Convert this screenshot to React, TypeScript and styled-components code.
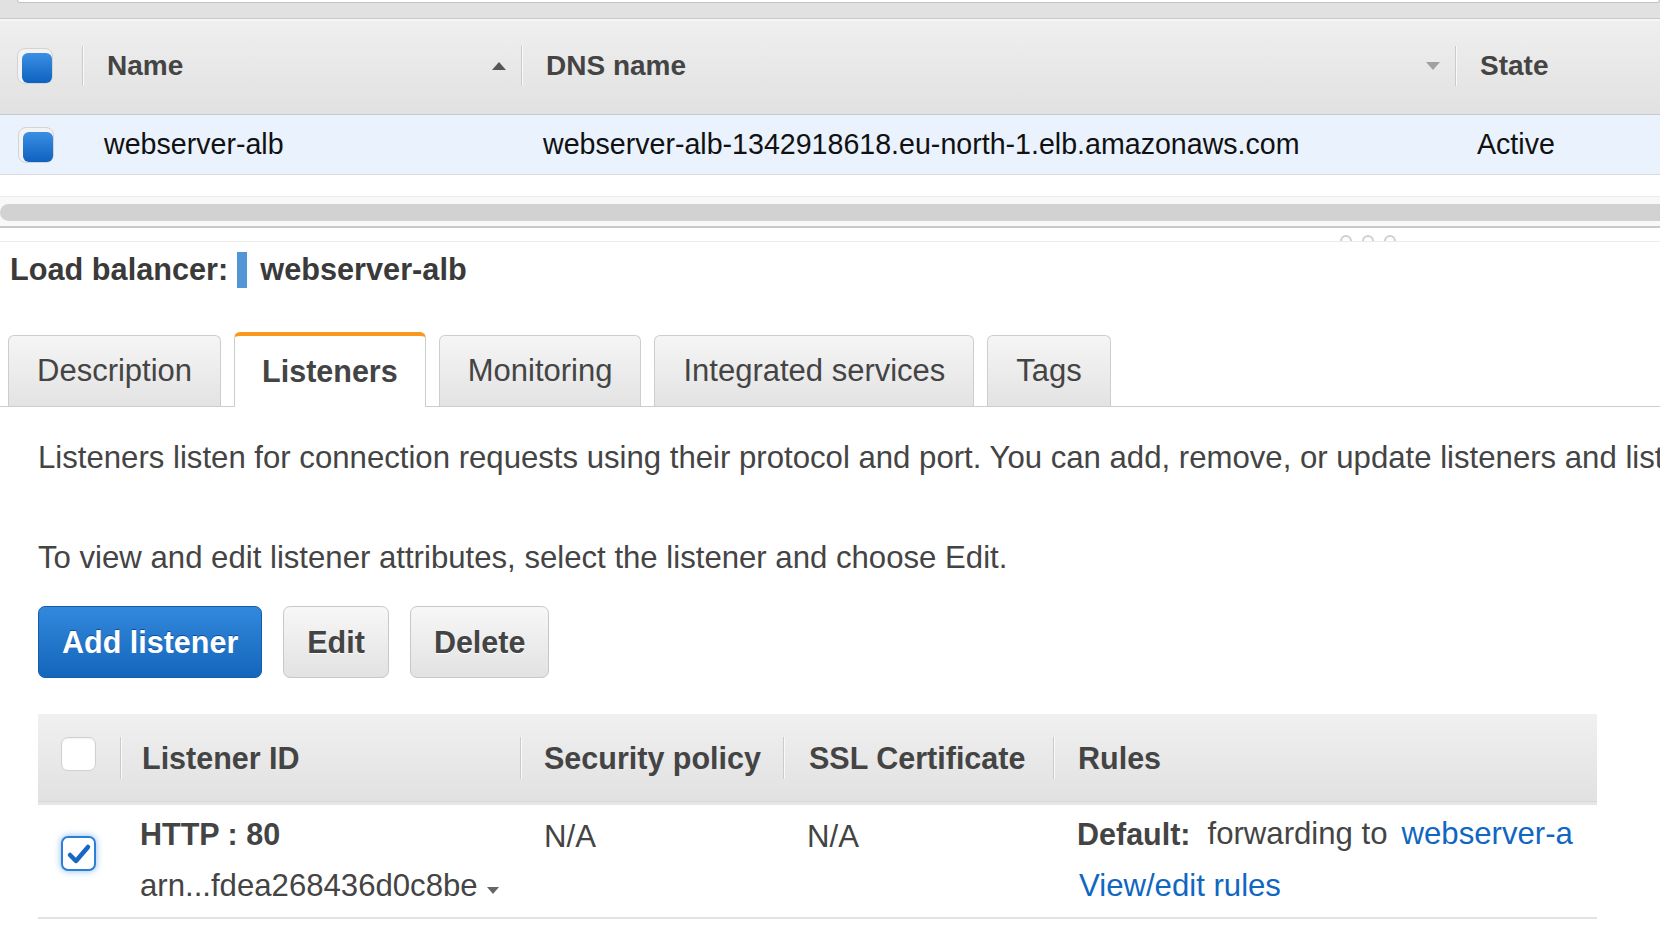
import React from "react";
import styled, { createGlobalStyle, css } from "styled-components";

const GlobalStyle = createGlobalStyle`
  html, body { margin: 0; padding: 0; background: #fff; }
  body { font-family: "Liberation Sans", Arial, Helvetica, sans-serif; }
  * { box-sizing: border-box; }
`;

const Page = styled.div`
  width: 1660px;
  height: 952px;
  overflow: hidden;
  background: #fff;
  display: flex;
  flex-direction: column;
`;

/* ---------- top load balancer grid ---------- */
const TopStrip = styled.div`
  flex: none;
  height: 19px;
  background: #e1e1e1;
  border-bottom: 1px solid #c9c9c9;
  padding-left: 17px;
`;
const SearchEdge = styled.div`
  height: 3px;
  background: #fff;
  border: 1px solid #c4c4c4;
  border-top: none;
  border-radius: 0 0 5px 5px;
`;

const gridCols = "82px 439px 934px 1fr";

const GridHeader = styled.div`
  flex: none;
  display: grid;
  grid-template-columns: ${gridCols};
  align-items: center;
  height: 96px;
  padding-bottom: 4px;
  border-top: 2px solid #f6f6f6;
  border-bottom: 1px solid #cacaca;
  background: linear-gradient(#efefef, #e1e1e1);
`;

const CheckCell = styled.div<{ $pad?: number }>`
  display: flex;
  align-items: center;
  padding-left: ${(p) => p.$pad ?? 17}px;
`;

const HeadCell = styled.div`
  display: flex;
  align-items: center;
  height: 100%;
  padding-right: 15px;
  font-size: 28px;
  font-weight: bold;
  color: #444;
`;

const ColSep = styled.span<{ $h?: number; $gap?: number }>`
  flex: none;
  width: 2px;
  height: ${(p) => p.$h ?? 40}px;
  border-left: 1px solid #cbcbcb;
  border-right: 1px solid #f9f9f9;
  margin-right: ${(p) => p.$gap ?? 23}px;
`;

const HeadLabel = styled.span`
  flex: 1;
`;

const SortArrow = styled.span<{ $dir: "up" | "down" }>`
  flex: none;
  width: 0;
  height: 0;
  border-left: 7px solid transparent;
  border-right: 7px solid transparent;
  ${(p) =>
    p.$dir === "up"
      ? css`border-bottom: 8px solid #555;`
      : css`border-top: 8px solid #a0a0a0;`}
`;

const BlueBox = styled.span`
  display: block;
  width: 36px;
  height: 36px;
  border-radius: 8px;
  background: #f3f3f3;
  border: 1px solid #d3d3d3;
  padding: 4px 0 0 4px;
`;
const BlueFill = styled.span`
  display: block;
  width: 100%;
  height: 100%;
  border-radius: 6px;
  background: linear-gradient(#3b8fe3, #0e61bf);
`;

const GridRow = styled.div`
  flex: none;
  display: grid;
  grid-template-columns: ${gridCols};
  align-items: center;
  height: 60px;
  background: #eaf2fd;
  border-bottom: 1px solid #d8dce2;
  font-size: 28.6px;
  color: #111;
`;

const RowCell = styled.div`
  padding-left: 22px;
  white-space: nowrap;
`;

const Spacer = styled.div<{ $h: number }>`
  flex: none;
  height: ${(p) => p.$h}px;
`;

const ScrollTrack = styled.div`
  flex: none;
  height: 32px;
  border-top: 1px solid #ececec;
  border-bottom: 2px solid #c8c8c8;
  background: #f8f8f8;
  padding: 7px 0 5px;
  overflow: hidden;
`;
const ScrollThumb = styled.div`
  height: 17px;
  margin-right: -30px;
  border-radius: 9px;
  background: #d2d2d2;
`;

const ResizeBar = styled.div`
  flex: none;
  height: 14px;
  border-bottom: 1px solid #ececec;
  padding-left: 1340px;
  display: flex;
  gap: 10px;
  overflow: hidden;
`;
const ResizeDot = styled.span`
  flex: none;
  width: 12px;
  height: 12px;
  margin-top: 7px;
  border-radius: 50%;
  border: 2px solid #cfcfcf;
`;

/* ---------- details pane ---------- */
const Details = styled.section`
  display: flex;
  flex-direction: column;
  color: #444;
`;

const Heading = styled.h2`
  margin: 8px 0 0 10px;
  display: flex;
  align-items: center;
  height: 40px;
  font-size: 30.7px;
  font-weight: bold;
  color: #3a3a3a;
`;
const HeadingBar = styled.span`
  flex: none;
  width: 10px;
  height: 36px;
  margin: 0 13px 0 9px;
  background: #5395d5;
`;

const TabBar = styled.div`
  margin-top: 42px;
  height: 75px;
  display: flex;
  align-items: flex-end;
  gap: 13px;
  padding-left: 8px;
  border-bottom: 1px solid #cdcdcd;
`;

const Tab = styled.div<{ $active?: boolean }>`
  display: flex;
  align-items: center;
  height: 71px;
  padding: 0 28px;
  border: 1px solid #cdcdcd;
  border-bottom: none;
  border-radius: 6px 6px 0 0;
  background: linear-gradient(#f5f5f5, #e3e3e3);
  font-size: 31px;
  color: #444;
  white-space: nowrap;
  ${(p) =>
    p.$active &&
    css`
      height: 75px;
      padding: 0 27px;
      margin-bottom: -1px;
      background: #fff;
      border-top: 4px solid #f8981d;
      font-size: 30.5px;
      font-weight: bold;
    `}
`;

const Body = styled.div`
  padding-left: 38px;
  display: flex;
  flex-direction: column;
`;

const Para = styled.p<{ $mt: number }>`
  margin: ${(p) => p.$mt}px 0 0;
  font-size: 31.15px;
  line-height: 40px;
  color: #444;
  white-space: nowrap;
`;

const ButtonRow = styled.div`
  margin-top: 28px;
  display: flex;
  gap: 21px;
`;

const Button = styled.button<{ $primary?: boolean }>`
  height: 72px;
  padding: 0 23px;
  border-radius: 7px;
  font-family: inherit;
  font-size: 30.5px;
  font-weight: bold;
  cursor: pointer;
  border: 1px solid #c8c8c8;
  background: linear-gradient(#f7f7f7, #e2e2e2);
  color: #444;
  text-shadow: 0 1px 0 #fff;
  ${(p) =>
    p.$primary &&
    css`
      border-color: #125cb0;
      background: linear-gradient(#3289dc, #1466bb);
      color: #fff;
      text-shadow: 0 -1px 0 #0d4f99;
    `}
`;

const lCols = "82px 400px 263px 270px 1fr";

const LTable = styled.div`
  margin-top: 36px;
  width: 1559px;
  display: flex;
  flex-direction: column;
`;

const LHeader = styled.div`
  display: grid;
  grid-template-columns: ${lCols};
  align-items: center;
  height: 91px;
  border-bottom: 3px solid #e6e6e6;
  box-shadow: inset 0 -1px 0 #d8d8d8;
  background: linear-gradient(#f0f0f0, #e1e1e1);
`;

const LHeadCell = styled.div`
  display: flex;
  align-items: center;
  font-size: 30.5px;
  font-weight: bold;
  color: #444;
  white-space: nowrap;
`;

const EmptyBox = styled.span`
  display: block;
  width: 35px;
  height: 34px;
  border-radius: 7px;
  border: 1px solid #d0d0d0;
  background: #fff;
  box-shadow: inset 0 1px 2px rgba(0, 0, 0, 0.06);
  margin-top: -9px;
`;

const CheckedBox = styled.span`
  display: flex;
  align-items: center;
  justify-content: center;
  width: 35px;
  height: 35px;
  border-radius: 7px;
  border: 2px solid #2c7fd8;
  background: #fff;
  box-shadow: 0 0 7px rgba(43, 127, 216, 0.55);
`;

const LRow = styled.div`
  display: grid;
  grid-template-columns: ${lCols};
  align-items: start;
  height: 114px;
  border-bottom: 2px solid #e3e3e3;
`;

const LCheckCell = styled.div`
  padding: 31px 0 0 23px;
`;

const LCell = styled.div<{ $pt: number; $pl?: number }>`
  padding: ${(p) => p.$pt}px 0 0 ${(p) => p.$pl ?? 24}px;
  display: flex;
  flex-direction: column;
  gap: 16px;
  white-space: nowrap;
  overflow: hidden;
`;

const Line = styled.div<{ $bold?: boolean; $indent?: number }>`
  display: flex;
  align-items: center;
  height: 36px;
  padding-left: ${(p) => p.$indent ?? 0}px;
  font-size: ${(p) => (p.$bold ? 30.5 : 31.15)}px;
  font-weight: ${(p) => (p.$bold ? "bold" : "normal")};
  color: #444;
`;

const Caret = styled.span`
  width: 0;
  height: 0;
  margin: 8px 0 0 9px;
  border-left: 6px solid transparent;
  border-right: 6px solid transparent;
  border-top: 7px solid #666;
`;

const RuleLabel = styled.span`
  font-weight: bold;
  font-size: 30.5px;
  margin-right: 17px;
`;

const Link = styled.a`
  color: #0f67c1;
  text-decoration: none;
  font-weight: normal;
`;

const Forward = styled.span`
  margin-right: 14px;
`;

function CheckMark() {
  return (
    <svg width="26" height="22" viewBox="0 0 26 22">
      <path
        d="M4 12 L10 18 L22 4"
        fill="none"
        stroke="#1768c4"
        strokeWidth="4.5"
        strokeLinecap="round"
        strokeLinejoin="round"
      />
    </svg>
  );
}

export default function App() {
  return (
    <Page>
      <GlobalStyle />
      <TopStrip>
        <SearchEdge />
      </TopStrip>

      <GridHeader>
        <CheckCell>
          <BlueBox>
            <BlueFill />
          </BlueBox>
        </CheckCell>
        <HeadCell>
          <ColSep />
          <HeadLabel>Name</HeadLabel>
          <SortArrow $dir="up" />
        </HeadCell>
        <HeadCell>
          <ColSep />
          <HeadLabel>DNS name</HeadLabel>
          <SortArrow $dir="down" />
        </HeadCell>
        <HeadCell>
          <ColSep />
          <HeadLabel>State</HeadLabel>
        </HeadCell>
      </GridHeader>

      <GridRow>
        <CheckCell $pad={18}>
          <BlueBox>
            <BlueFill />
          </BlueBox>
        </CheckCell>
        <RowCell>webserver-alb</RowCell>
        <RowCell>webserver-alb-1342918618.eu-north-1.elb.amazonaws.com</RowCell>
        <RowCell>Active</RowCell>
      </GridRow>

      <Spacer $h={21} />
      <ScrollTrack>
        <ScrollThumb />
      </ScrollTrack>
      <ResizeBar>
        <ResizeDot />
        <ResizeDot />
        <ResizeDot />
      </ResizeBar>

      <Details>
        <Heading>
          Load balancer:
          <HeadingBar />
          webserver-alb
        </Heading>

        <TabBar>
          <Tab>Description</Tab>
          <Tab $active>Listeners</Tab>
          <Tab>Monitoring</Tab>
          <Tab>Integrated services</Tab>
          <Tab>Tags</Tab>
        </TabBar>

        <Body>
          <Para $mt={31}>
            Listeners listen for connection requests using their protocol and port. You can add, remove, or
            update listeners and listener rules after you create your load balancer.
          </Para>
          <Para $mt={60}>
            To view and edit listener attributes, select the listener and choose Edit.
          </Para>

          <ButtonRow>
            <Button $primary>Add listener</Button>
            <Button>Edit</Button>
            <Button>Delete</Button>
          </ButtonRow>

          <LTable>
            <LHeader>
              <CheckCell $pad={23}>
                <EmptyBox />
              </CheckCell>
              <LHeadCell>
                <ColSep $h={42} $gap={20} />
                Listener ID
              </LHeadCell>
              <LHeadCell>
                <ColSep $h={42} $gap={22} />
                Security policy
              </LHeadCell>
              <LHeadCell>
                <ColSep $h={42} $gap={24} />
                SSL Certificate
              </LHeadCell>
              <LHeadCell>
                <ColSep $h={42} $gap={23} />
                Rules
              </LHeadCell>
            </LHeader>

            <LRow>
              <LCheckCell>
                <CheckedBox>
                  <CheckMark />
                </CheckedBox>
              </LCheckCell>
              <LCell $pt={11} $pl={20}>
                <Line $bold>HTTP : 80</Line>
                <Line>
                  arn...fdea268436d0c8be
                  <Caret />
                </Line>
              </LCell>
              <LCell $pt={14}>
                <Line>N/A</Line>
              </LCell>
              <LCell $pt={14}>
                <Line>N/A</Line>
              </LCell>
              <LCell $pt={11}>
                <Line>
                  <RuleLabel>Default:</RuleLabel>
                  <Forward>forwarding to</Forward>
                  <Link href="#">webserver-a</Link>
                </Line>
                <Line $indent={2}>
                  <Link href="#">View/edit rules</Link>
                </Line>
              </LCell>
            </LRow>
          </LTable>
        </Body>
      </Details>
    </Page>
  );
}
